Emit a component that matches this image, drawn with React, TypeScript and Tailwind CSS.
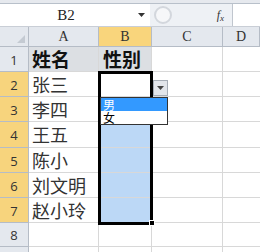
const cjk = { fontFamily: '"Noto Sans CJK SC", "Noto Sans", sans-serif' };
const serif = { fontFamily: '"Liberation Serif", "DejaVu Serif", serif' };

const names = ["张三", "李四", "王五", "陈小", "刘文明", "赵小玲"];
const rowHeights = ["h-[25px]", "h-[25px]", "h-[25px]", "h-[26px]", "h-[25px]", "h-[25px]", "h-[25px]", "h-[24px]", "h-[6px]"];

const App = () => {
  return (
    <div className="relative h-[252px] w-[260px] overflow-hidden bg-white">
      {/* ribbon edge */}
      <div className="h-[4px] border-b border-[#b8c0ca] bg-[#e6e9ee]" />

      {/* name box + formula bar */}
      <div className="flex h-[23px] items-center border-b border-[#c9ced6] bg-[#eef1f5]">
        <div className="flex h-full w-[150px] items-center bg-white">
          <span className="flex-1 pr-[6px] text-center text-[15px] text-[#222]" style={serif}>
            B2
          </span>
          <svg width="7" height="4" viewBox="0 0 7 4" className="mr-[5px]">
            <path d="M0 0h7L3.5 4z" fill="#333" />
          </svg>
        </div>
        <div className="ml-[4px] h-[18px] w-[18px] rounded-full border-2 border-[#d3d7dd] bg-[#f6f7f9]" />
        <span className="ml-auto mr-[8px] text-[12px] italic text-[#333]" style={serif}>
          f<sub className="text-[9px]">x</sub>
        </span>
        <div className="h-full w-[28px] border-l border-[#c0c6ce] bg-white" />
      </div>

      {/* sheet */}
      <div className="grid grid-cols-[29px_70px_53px_71px_1fr]">
        {/* header row */}
        <div className="relative flex h-[20px] items-end justify-end border-b border-r border-[#b5bcc6] bg-[#e4e8ee] p-[3px]">
          <svg width="8" height="8" viewBox="0 0 8 8">
            <path d="M8 0V8H0z" fill="#c4cad2" />
          </svg>
        </div>
        {["A", "B", "C", "D"].map((c) => (
          <div
            key={c}
            className={`flex h-[20px] items-center justify-center border-b border-r border-[#b5bcc6] text-[14px] text-[#333] ${
              c === "B" ? "bg-[#f9d57c]" : "bg-[#e4e8ee]"
            }`}
            style={serif}
          >
            {c}
          </div>
        ))}

        {rowHeights.map((h, i) => {
          const r = i + 1;
          const selected = r >= 2 && r <= 7;
          const a = r === 1 ? "姓名" : names[r - 2] ?? "";
          const b = r === 1 ? "性别" : "";
          return (
            <div key={r} className="contents">
              <div
                className={`${h} flex items-center justify-center border-b border-r border-[#b5bcc6] pt-[3px] text-[13px] text-[#333] ${
                  selected ? "bg-[#f7d47d]" : "bg-[#e4e8ee]"
                }`}
                style={{ fontFamily: '"Open Sans", "DejaVu Sans", sans-serif' }}
              >
                {r <= 8 ? r : ""}
              </div>
              <div
                className={`${h} flex items-center overflow-visible whitespace-nowrap border-b border-r border-[#d8d8d8] pl-[3px] ${
                  r === 1 ? "bg-[#dcdfe3] text-[19px] font-bold text-[#111]" : "text-[18px] text-[#333]"
                }`}
                style={cjk}
              >
                {a}
              </div>
              <div
                className={`${h} flex items-center border-b border-r border-[#d8d8d8] pl-[4px] ${
                  r === 1 ? "bg-[#dcdfe3] text-[19px] font-bold text-[#111]" : ""
                } ${r >= 3 && r <= 7 ? "bg-[#bcd8f6]" : ""}`}
                style={cjk}
              >
                {b}
              </div>
              <div className={`${h} border-b border-r border-[#d8d8d8]`} />
              <div className={`${h} border-b border-[#d8d8d8]`} />
            </div>
          );
        })}
      </div>

      {/* selection border B2:B7 */}
      <div className="absolute left-[98px] top-[71px] h-[154px] w-[55px] border-[3px] border-black" />
      {/* fill handle */}
      <div className="absolute left-[149px] top-[220px] h-[6px] w-[6px] border border-white bg-black" />

      {/* in-cell dropdown button */}
      <div className="absolute left-[153px] top-[80px] flex h-[16px] w-[15px] items-center justify-center border border-[#a6adb6] bg-[#e2e5ea]">
        <svg width="7" height="4" viewBox="0 0 7 4">
          <path d="M0 0h7L3.5 4z" fill="#444" />
        </svg>
      </div>

      {/* validation list */}
      <div
        className="absolute left-[100px] top-[97px] w-[68px] border border-[#333] bg-white text-[12px] leading-[13px]"
        style={cjk}
      >
        <div className="h-[13px] bg-[#3399ff] pl-[2px] text-white">男</div>
        <div className="h-[13px] pl-[2px] text-black">女</div>
      </div>
    </div>
  );
};

export default App;
